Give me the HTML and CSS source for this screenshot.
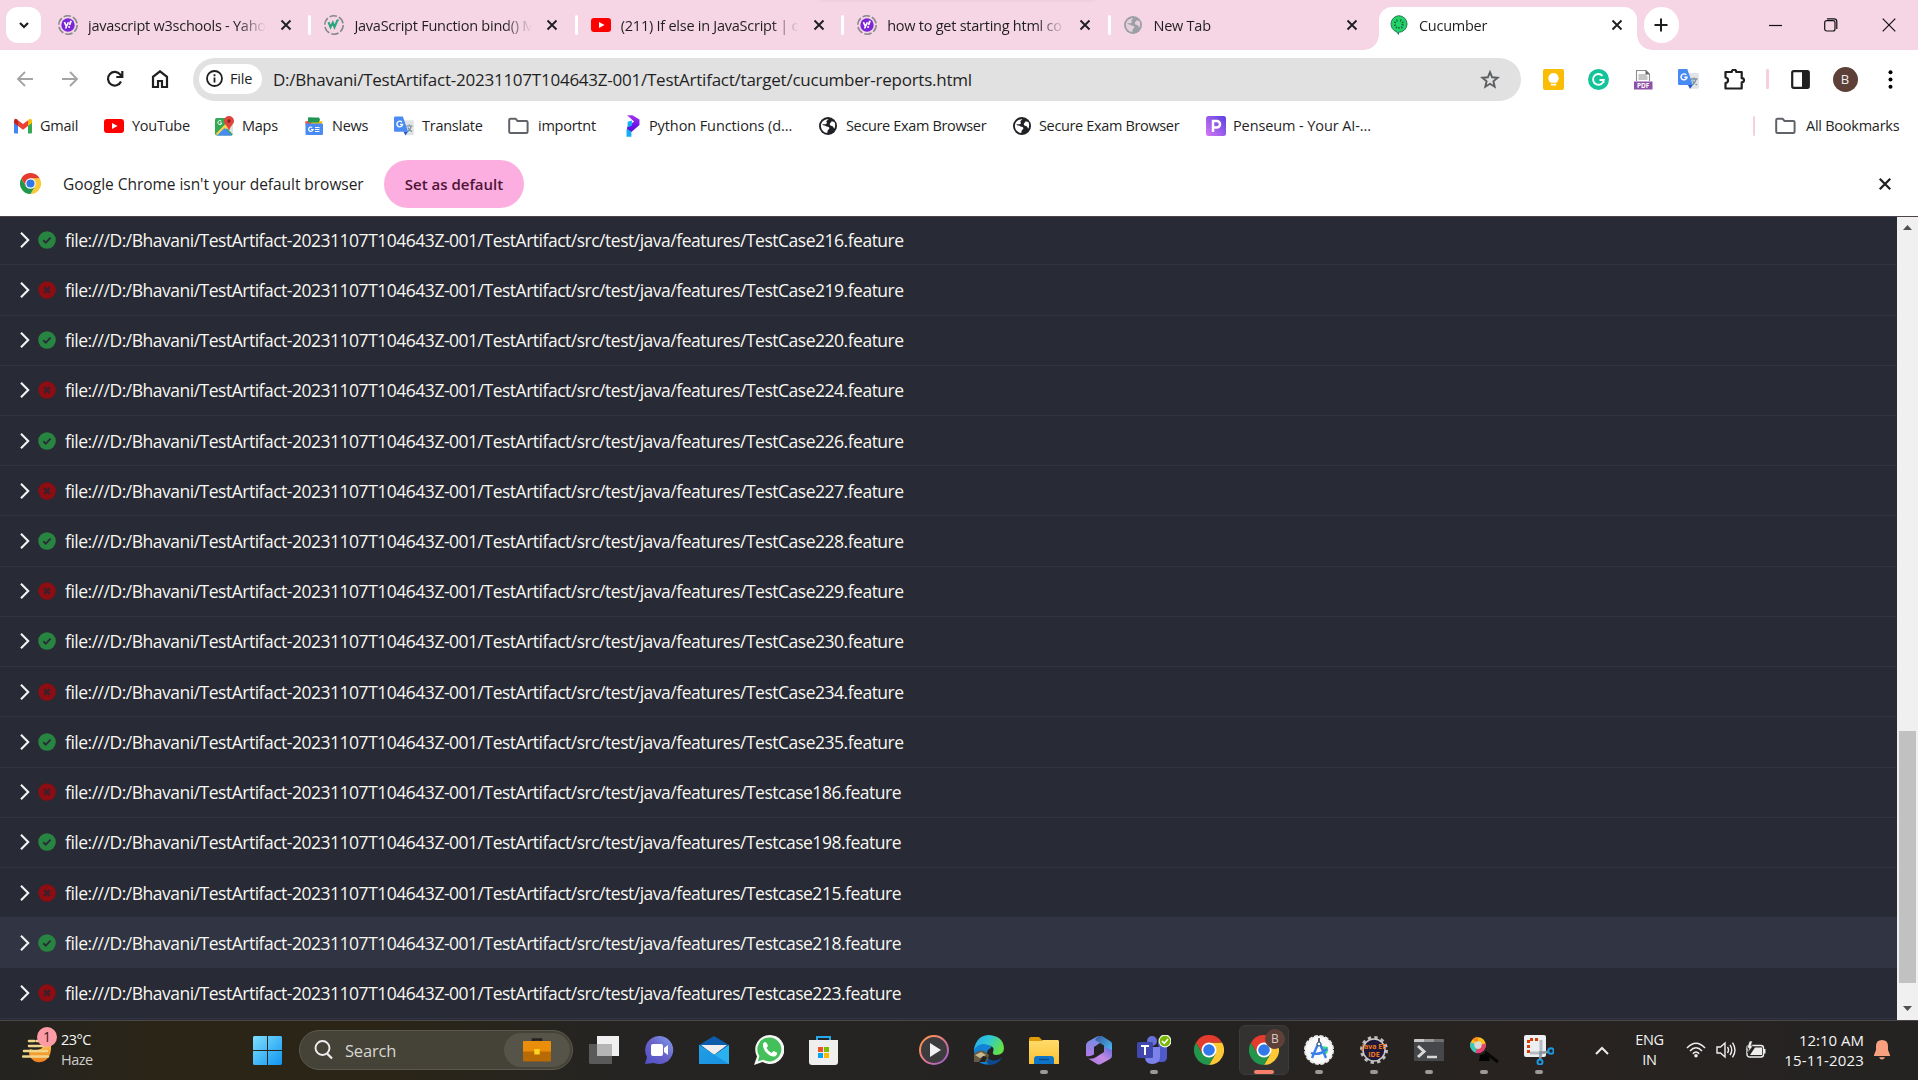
FILE: index.html
```html
<!DOCTYPE html>
<html lang="en">
<head>
<meta charset="utf-8">
<title>Cucumber</title>
<link rel="stylesheet" href="styles.css">
</head>
<body>
<svg class="defs" width="0" height="0" aria-hidden="true">
  <defs>
    <linearGradient id="g-win" x1="0" y1="0" x2="1" y2="1"><stop offset="0" stop-color="#7fe0ff"/><stop offset="1" stop-color="#0f94ef"/></linearGradient>
    <linearGradient id="g-chat" x1="1" y1="0" x2="0" y2="1"><stop offset="0" stop-color="#7ea2ee"/><stop offset=".5" stop-color="#6a62c8"/><stop offset="1" stop-color="#4f50c8"/></linearGradient>
    <linearGradient id="g-mail" x1="0" y1="0" x2="1" y2="1"><stop offset="0" stop-color="#1fa0e6"/><stop offset="1" stop-color="#1b8fe0"/></linearGradient>
    <linearGradient id="g-media" x1="0" y1="0" x2="1" y2="1"><stop offset="0" stop-color="#ff9a3c"/><stop offset=".5" stop-color="#e8788c"/><stop offset="1" stop-color="#8c5cd0"/></linearGradient>
    <linearGradient id="g-edge" x1="0" y1="0" x2="1" y2=".4"><stop offset="0" stop-color="#2aa7ee"/><stop offset=".5" stop-color="#2fc6d8"/><stop offset="1" stop-color="#62e04c"/></linearGradient>
    <linearGradient id="g-py" x1="0" y1="0" x2="0" y2="1"><stop offset="0" stop-color="#a435f0"/><stop offset=".6" stop-color="#6a11e8"/><stop offset="1" stop-color="#5a10d8"/></linearGradient>
    <linearGradient id="g-pen" x1="0" y1="1" x2="1" y2="0"><stop offset="0" stop-color="#d678f4"/><stop offset="1" stop-color="#5a3fe0"/></linearGradient>
    <linearGradient id="g-folder" x1="0" y1="0" x2="0" y2="1"><stop offset="0" stop-color="#ffdc6a"/><stop offset="1" stop-color="#fcc033"/></linearGradient>
    <linearGradient id="g-sun" x1="0" y1="0" x2="0" y2="1"><stop offset="0" stop-color="#fbc04a"/><stop offset="1" stop-color="#f07f1c"/></linearGradient>
    <linearGradient id="g-m1" x1="0" y1="0" x2="0" y2="1"><stop offset="0" stop-color="#6f8fe0"/><stop offset="1" stop-color="#b07ae6"/></linearGradient>
    <linearGradient id="g-m2" x1="0" y1="0" x2="1" y2="1"><stop offset="0" stop-color="#38589c"/><stop offset="1" stop-color="#4cc4fa"/></linearGradient>
    <linearGradient id="g-m3" x1="0" y1="1" x2="1" y2="0"><stop offset="0" stop-color="#a878e0"/><stop offset=".5" stop-color="#c48ae4"/><stop offset="1" stop-color="#5b6be0"/></linearGradient>

    <symbol id="close" viewBox="0 0 12 12"><path d="M1.5 1.5l9 9M10.500 1.500l-9 9" stroke="currentColor" stroke-width="1.9" fill="none"/></symbol>
    <symbol id="yahoo" viewBox="0 0 20 20"><circle cx="10" cy="10" r="9.200" fill="none" stroke="#85878e" stroke-width="1.500" stroke-dasharray="7.500 2.130"/><circle cx="10" cy="10" r="6.700" fill="#7b25d9"/><path d="M6.400 7.200l2 4.200M10.400 7.200l-2.800 6.300" stroke="#fff" stroke-width="1.600"/><path d="M13 5.800l-1.500 4.200" stroke="#fff" stroke-width="1.900"/><circle cx="11.100" cy="12" r="1" fill="#fff"/></symbol>
    <symbol id="w3" viewBox="0 0 20 20"><circle cx="10" cy="10" r="9.200" fill="none" stroke="#85878e" stroke-width="1.500" stroke-dasharray="7.500 2.130"/><path d="M4.500 7.200l2 5 2.300-4.600 1.700 4.600 2.300-5.600c.3-1.300 1-1.500 1.900-1" stroke="#2da57d" stroke-width="2.100" fill="none"/></symbol>
    <symbol id="yt" viewBox="0 0 20 14"><rect width="20" height="14" rx="3" fill="#f00"/><path d="M8 4l5.500 3L8 10z" fill="#fff"/></symbol>
    <symbol id="globe" viewBox="0 0 18 18"><circle cx="9" cy="9" r="9" fill="currentColor"/><path d="M9.500 2.200c-1 1.200-2.200 1.400-2.200 2.900 1.300.6.400 2.200-.9 2.100H3.200c1 1.700 3 1 4.400 2.200 1.500.3 2.600.6 2.800 1.700.1 1.400-1.700 1.600-1.900 3.100L8.300 16C5 16 1.700 12.800 1.900 8.300 2.300 4.500 5.700 1.900 9.500 2.200z" fill="var(--hole)"/><path d="M12.300 4.500c1.500-.2 2.400-.1 3.100.6 1 2 1 4.300.1 6.400-1.100-.2-.9-2.300-2.500-2.600-1.600-.1-2.400-1-2.200-2.100.2-1 1.400-1 1.500-2.300z" fill="var(--hole)"/></symbol>
    <symbol id="cuke" viewBox="0 0 18 20"><path d="M9 .7a8.300 8.300 0 1 1-.5 16.600V19.400l-1.700-2.500A8.300 8.300 0 0 1 9 .7z" fill="#24d366" stroke="#1f6b50" stroke-width=".9"/><g stroke="#11604a" stroke-width="1.300" stroke-linecap="round"><path d="M6.800 5l.4.900M10.900 5l-.4.900M13 7.200l-.8.500M4.700 7.200l.9.400M4.500 10.300l1-.2M6.200 12.900l.5-.8M9 12.300v1M11.500 12l.6.800M12 9.700l1.200.2"/></g></symbol>
    <symbol id="folder" viewBox="0 0 21 17"><path d="M1.200 14V2.500q0-1.300 1.300-1.300h5l2 2.300h8.800q1.300 0 1.300 1.300V14q0 1.500-1.300 1.500H2.500Q1.200 15.500 1.200 14z" fill="none" stroke="#5f6368" stroke-width="2"/></symbol>
    <symbol id="translate" viewBox="0 0 21 20"><path d="M8 4h11.500q1.300 0 1.300 1.300v13.200q0 1.300-1.300 1.300H13z" fill="#e1e3e6"/><path d="M12.500 10h7M16 8.500v1.500M14 16c2-1 3.500-3 4-6M14.500 11.500c.8 2 2 3.200 4.500 4.400" stroke="#7893a0" stroke-width="1.300" fill="none"/><path d="M1.300 0h8l5.500 16H1.300Q0 16 0 14.700V1.300Q0 0 1.300 0z" fill="#4a8af4"/><path d="M10 16h4.700L12 20z" fill="#2457c5"/><path d="M8.300 5.900A3 3 0 1 0 9 8.300H6.300" stroke="#fff" stroke-width="1.400" fill="none"/></symbol>
    <symbol id="chrome" viewBox="0 0 48 48"><path d="M24 12h20.800A24 24 0 0 1 24 48l10.400-18z" fill="#fcc934"/><path d="M34.400 30L24 48A24 24 0 0 1 3.200 12l10.400 18z" fill="#22974c"/><path d="M13.600 30L3.200 12A24 24 0 0 1 44.800 12H24z" fill="#e33b2e"/><circle cx="24" cy="24" r="12" fill="#fff"/><circle cx="24" cy="24" r="9.300" fill="#3178ea"/></symbol>
    <symbol id="pass" viewBox="0 0 18 18"><circle cx="9" cy="9" r="8.800" fill="#288441"/><path d="M5.300 9.200l2.500 2.400 4.800-4.900" stroke="#2a2b38" stroke-width="1.900" fill="none"/></symbol>
    <symbol id="fail" viewBox="0 0 18 18"><circle cx="9" cy="9" r="8.800" fill="#8c0d12"/><path d="M6.300 6.300l5.400 5.400M11.700 6.300l-5.400 5.400" stroke="#35232e" stroke-width="2.300" fill="none"/></symbol>
    <symbol id="chev" viewBox="0 0 10 16"><path d="M1 .8l7.200 7.200L1 15.200" stroke="#f4f4f4" stroke-width="2.100" fill="none"/></symbol>
  </defs>
</svg>

<header class="tabstrip">
  <div class="tab-search"><svg width="10" height="7" viewBox="0 0 10 7"><path d="M1 1l4 4 4-4" stroke="#1f1f1f" stroke-width="2.200" fill="none"/></svg></div>
  <div class="tab"><svg class="fav"><use href="#yahoo"/></svg><span class="tab-title">javascript w3schools - Yahoo</span><svg class="x"><use href="#close"/></svg></div>
  <div class="tab"><svg class="fav"><use href="#w3"/></svg><span class="tab-title">JavaScript Function bind() M</span><svg class="x"><use href="#close"/></svg></div>
  <div class="tab"><svg class="fav fav-yt"><use href="#yt"/></svg><span class="tab-title">(211) If else in JavaScript | c</span><svg class="x"><use href="#close"/></svg></div>
  <div class="tab"><svg class="fav"><use href="#yahoo"/></svg><span class="tab-title">how to get starting html co</span><svg class="x"><use href="#close"/></svg></div>
  <div class="tab last"><svg class="fav fav-globe"><use href="#globe"/></svg><span class="tab-title">New Tab</span><svg class="x"><use href="#close"/></svg></div>
  <div class="tab active"><svg class="fav fav-cuke"><use href="#cuke"/></svg><span class="tab-title">Cucumber</span><svg class="x"><use href="#close"/></svg></div>
  <div class="new-tab"><svg width="14" height="14" viewBox="0 0 14 14"><path d="M7 .5v13M.5 7h13" stroke="#1f1f1f" stroke-width="2"/></svg></div>
  <div class="window-buttons">
    <svg width="13" height="13" viewBox="0 0 13 13"><path d="M0 6.500h13" stroke="#111" stroke-width="1.200"/></svg>
    <svg width="14" height="14" viewBox="0 0 14 14"><rect x=".7" y="2.700" width="10.300" height="10.300" rx="2" fill="none" stroke="#111" stroke-width="1.200"/><path d="M3 .8h7q2.800 0 2.800 2.800V11" fill="none" stroke="#111" stroke-width="1.200"/></svg>
    <svg width="14" height="14" viewBox="0 0 14 14"><path d="M.7.7l12.600 12.600M13.300.7L.7 13.300" stroke="#111" stroke-width="1.200"/></svg>
  </div>
</header>

<nav class="toolbar">
  <svg class="nav-icon dim" viewBox="0 0 18 18"><path d="M17 9H2.500M9 2L2 9l7 7" /></svg>
  <svg class="nav-icon dim" viewBox="0 0 18 18"><path d="M1 9h14.500M9 2l7 7-7 7"/></svg>
  <svg class="nav-icon" viewBox="0 0 18 18"><path d="M15 11.500A6.800 6.800 0 1 1 14.300 4.700L16 6.600M16.300 1v6h-6"/></svg>
  <svg class="nav-icon" viewBox="0 0 18 18"><path d="M2 17V6.800L9 1.300l7 5.500V17h-5v-6H7v6z"/></svg>
  <div class="omnibox">
    <span class="chip"><svg width="17" height="17" viewBox="0 0 17 17"><circle cx="8.500" cy="8.500" r="7.500" fill="none" stroke="#1f1f1f" stroke-width="1.800"/><path d="M8.500 7.500v5M8.500 4.300v1.900" stroke="#1f1f1f" stroke-width="1.800"/></svg><span class="chip-text">File</span></span>
    <span class="url">D:/Bhavani/TestArtifact-20231107T104643Z-001/TestArtifact/target/cucumber-reports.html</span>
    <svg class="star" width="20" height="19" viewBox="0 0 20 19"><path d="M10 2.200l2.100 5.100 5.500.4-4.200 3.600 1.300 5.400L10 13.800l-4.700 2.900 1.300-5.400-4.200-3.600 5.500-.4z" fill="none" stroke="#5c5f62" stroke-width="1.900"/></svg>
  </div>
  <div class="extensions">
    <svg viewBox="0 0 21 21" width="21" height="21"><rect width="21" height="21" rx="2" fill="#fbbc04"/><path d="M10.500 4a5.300 5.300 0 0 0-2.800 9.700h5.600A5.300 5.300 0 0 0 10.500 4zM7.800 14.800h5.400v1.700H7.800z" fill="#fff"/></svg>
    <svg viewBox="0 0 21 21" width="21" height="21"><circle cx="10.500" cy="10.500" r="10.500" fill="#15c39a"/><path d="M14.500 6.800A5.400 5.400 0 1 0 15.800 11h-4.300M15.500 10.500V14" stroke="#fff" stroke-width="1.900" fill="none"/></svg>
    <svg viewBox="0 0 21 21" width="21" height="21"><path d="M3.500 12V1.500h9.500l3.500 3.500v7" fill="#fff" stroke="#8d8d8d" stroke-width="1.100"/><path d="M12.500 1v4.500h4.300z" fill="#666"/><path d="M5.500 6h8M5.500 8h9M5.500 10h9" stroke="#8d8d8d"/><rect x="1" y="12.500" width="18.500" height="8" fill="#8d52a8"/><text x="10.200" y="18.900" class="pdf" text-anchor="middle">PDF</text></svg>
    <svg width="21" height="20"><use href="#translate"/></svg>
    <svg class="puzzle" viewBox="0 0 21 21" width="21" height="21"><path d="M1.500 3h6.300c0-3 4.400-3 4.400 0h5.500v6.200c3 0 3 4.200 0 4.200V19.500H1.500V14c3.400-.5 3.400-5 0-5.500z" fill="none" stroke="#1f1f1f" stroke-width="2.200" stroke-linejoin="round"/></svg>
    <i class="divider"></i>
    <svg class="panel" viewBox="0 0 19 19" width="19" height="19"><rect x="1.200" y="1.200" width="16.600" height="16.600" rx="1.500" fill="none" stroke="#1f1f1f" stroke-width="2.200"/><path d="M11 1h7v17h-7z" fill="#1f1f1f"/></svg>
    <span class="avatar">B</span>
    <svg class="more" viewBox="0 0 5 19" width="5" height="19"><circle cx="2.500" cy="2.300" r="2" /><circle cx="2.500" cy="9.500" r="2"/><circle cx="2.500" cy="16.700" r="2"/></svg>
  </div>
</nav>

<nav class="bookmarks">
  <a class="bm gmail"><svg class="ic" viewBox="0 0 18 16"><path d="M0 2.500V14.500q0 1 1 1h3V7z" fill="#4285f4"/><path d="M18 2.500v12q0 1-1 1h-3V7z" fill="#34a853"/><path d="M14 2.200l1-.9q1.300-.8 2.400 0l.6 1.200V5l-4 3z" fill="#fbbc04"/><path d="M4 2.200L9 6l5-3.800V8L9 11.800 4 8z" fill="#ea4335"/><path d="M0 2.500Q.6 0 3 1.300l1 .9V8L0 5z" fill="#c5221f"/></svg><span>Gmail</span></a>
  <a class="bm youtube"><svg class="ic"><use href="#yt"/></svg><span>YouTube</span></a>
  <a class="bm maps"><svg class="ic" viewBox="0 0 19 20"><rect y="2" width="18" height="17.500" rx="2" fill="#34a853"/><path d="M18 3.500v15L9.500 10z" fill="#dfe1e4"/><path d="M1 17.500L14 4.500l3 3L4.500 19H2z" fill="#fbd04b"/><path d="M9.500 12l7.500 7.500H2z" fill="#4a8af4"/><path d="M14 0a5 5 0 0 1 5 5c0 3.500-3.500 4-4.500 9h-1C12.500 9 9 8.500 9 5a5 5 0 0 1 5-5z" fill="#e0443a"/><circle cx="14" cy="5" r="1.700" fill="#8a211b"/><path d="M6.300 5.200A2 2 0 1 0 6.800 7H5" stroke="#fff" fill="none"/></svg><span>Maps</span></a>
  <a class="bm news"><svg class="ic" viewBox="0 0 18 19"><path d="M4 1l11 1-1 8H3z" fill="#219653"/><path d="M0 5l13-3 2 8H1z" fill="#ea5a50"/><path d="M7 3l10.500 2L16 12H5z" fill="#fbbc04"/><path d="M3 1h11v5H3z" fill="#219653"/><path d="M1 7h16q1 0 1 1v9.500q0 1-1 1H1.500q-1 0-1-1V8z" fill="#4a8af4"/><path d="M7.200 11A2.200 2.200 0 1 0 8 13H6M10 11h4.500M10 13h4.500M10 15h4.500" stroke="#fff" stroke-width="1.200" fill="none"/></svg><span>News</span></a>
  <a class="bm translate"><svg class="ic"><use href="#translate"/></svg><span>Translate</span></a>
  <a class="bm dir"><svg class="ic"><use href="#folder"/></svg><span>importnt</span></a>
  <a class="bm python"><svg class="ic" viewBox="0 0 13 20"><path d="M1 0h5l6.500 4v5L5 15.500 1 17v-6L7.500 5.800z" fill="url(#g-py)"/><path d="M1.500 6l4-1v4.500l-4 2z" fill="#12aef2"/><path d="M.5 12.500L5 15v5H.5z" fill="#12aef2"/></svg><span>Python Functions (d...</span></a>
  <a class="bm seb1"><svg class="ic"><use href="#globe"/></svg><span>Secure Exam Browser</span></a>
  <a class="bm seb2"><svg class="ic"><use href="#globe"/></svg><span>Secure Exam Browser</span></a>
  <a class="bm penseum"><svg class="ic" viewBox="0 0 20 20"><rect width="20" height="20" rx="2.500" fill="url(#g-pen)"/><path d="M7 16V5h3.700a3.200 3.200 0 0 1 0 6.600H7" fill="none" stroke="#fff" stroke-width="2.500"/></svg><span>Penseum - Your AI-...</span></a>
  <i class="divider"></i>
  <a class="bm all"><svg class="ic"><use href="#folder"/></svg><span>All Bookmarks</span></a>
</nav>

<section class="infobar">
  <svg class="brand"><use href="#chrome"/></svg>
  <span class="message">Google Chrome isn't your default browser</span>
  <button class="default-btn"><span>Set as default</span></button>
  <svg class="dismiss"><use href="#close"/></svg>
</section>

<main class="viewport">
  <ul class="report">
    <li><svg class="chev"><use href="#chev"/></svg><svg class="st"><use href="#pass"/></svg><span>file:///D:/Bhavani/TestArtifact-20231107T104643Z-001/TestArtifact/src/test/java/features/TestCase216.feature</span></li>
    <li><svg class="chev"><use href="#chev"/></svg><svg class="st"><use href="#fail"/></svg><span>file:///D:/Bhavani/TestArtifact-20231107T104643Z-001/TestArtifact/src/test/java/features/TestCase219.feature</span></li>
    <li><svg class="chev"><use href="#chev"/></svg><svg class="st"><use href="#pass"/></svg><span>file:///D:/Bhavani/TestArtifact-20231107T104643Z-001/TestArtifact/src/test/java/features/TestCase220.feature</span></li>
    <li><svg class="chev"><use href="#chev"/></svg><svg class="st"><use href="#fail"/></svg><span>file:///D:/Bhavani/TestArtifact-20231107T104643Z-001/TestArtifact/src/test/java/features/TestCase224.feature</span></li>
    <li><svg class="chev"><use href="#chev"/></svg><svg class="st"><use href="#pass"/></svg><span>file:///D:/Bhavani/TestArtifact-20231107T104643Z-001/TestArtifact/src/test/java/features/TestCase226.feature</span></li>
    <li><svg class="chev"><use href="#chev"/></svg><svg class="st"><use href="#fail"/></svg><span>file:///D:/Bhavani/TestArtifact-20231107T104643Z-001/TestArtifact/src/test/java/features/TestCase227.feature</span></li>
    <li><svg class="chev"><use href="#chev"/></svg><svg class="st"><use href="#pass"/></svg><span>file:///D:/Bhavani/TestArtifact-20231107T104643Z-001/TestArtifact/src/test/java/features/TestCase228.feature</span></li>
    <li><svg class="chev"><use href="#chev"/></svg><svg class="st"><use href="#fail"/></svg><span>file:///D:/Bhavani/TestArtifact-20231107T104643Z-001/TestArtifact/src/test/java/features/TestCase229.feature</span></li>
    <li><svg class="chev"><use href="#chev"/></svg><svg class="st"><use href="#pass"/></svg><span>file:///D:/Bhavani/TestArtifact-20231107T104643Z-001/TestArtifact/src/test/java/features/TestCase230.feature</span></li>
    <li><svg class="chev"><use href="#chev"/></svg><svg class="st"><use href="#fail"/></svg><span>file:///D:/Bhavani/TestArtifact-20231107T104643Z-001/TestArtifact/src/test/java/features/TestCase234.feature</span></li>
    <li><svg class="chev"><use href="#chev"/></svg><svg class="st"><use href="#pass"/></svg><span>file:///D:/Bhavani/TestArtifact-20231107T104643Z-001/TestArtifact/src/test/java/features/TestCase235.feature</span></li>
    <li><svg class="chev"><use href="#chev"/></svg><svg class="st"><use href="#fail"/></svg><span>file:///D:/Bhavani/TestArtifact-20231107T104643Z-001/TestArtifact/src/test/java/features/Testcase186.feature</span></li>
    <li><svg class="chev"><use href="#chev"/></svg><svg class="st"><use href="#pass"/></svg><span>file:///D:/Bhavani/TestArtifact-20231107T104643Z-001/TestArtifact/src/test/java/features/Testcase198.feature</span></li>
    <li><svg class="chev"><use href="#chev"/></svg><svg class="st"><use href="#fail"/></svg><span>file:///D:/Bhavani/TestArtifact-20231107T104643Z-001/TestArtifact/src/test/java/features/Testcase215.feature</span></li>
    <li class="hover"><svg class="chev"><use href="#chev"/></svg><svg class="st"><use href="#pass"/></svg><span>file:///D:/Bhavani/TestArtifact-20231107T104643Z-001/TestArtifact/src/test/java/features/Testcase218.feature</span></li>
    <li><svg class="chev"><use href="#chev"/></svg><svg class="st"><use href="#fail"/></svg><span>file:///D:/Bhavani/TestArtifact-20231107T104643Z-001/TestArtifact/src/test/java/features/Testcase223.feature</span></li>
  </ul>
  <div class="scrollbar">
    <svg width="9" height="5" viewBox="0 0 9 5"><path d="M0 5L4.500 0 9 5z" fill="#505050"/></svg>
    <div class="thumb"></div>
    <svg width="9" height="5" viewBox="0 0 9 5"><path d="M0 0l4.500 5L9 0z" fill="#505050"/></svg>
  </div>
</main>

<footer class="taskbar">
  <div class="weather">
    <svg width="37" height="40" viewBox="0 0 37 40"><path d="M8 22q10 4 15-5h6q1 11-5 16-6 4-12 1-4-3-5-7z" fill="url(#g-sun)"/><path d="M7 14h5M14.500 14h4M7 19h19M2 24h23M6 29.500h20M1 29.500h4" stroke="#f0d68c" stroke-width="2.500" stroke-linecap="round"/><circle cx="25" cy="10" r="10" fill="#ff9ba5"/><text x="25" y="15" class="count" text-anchor="middle">1</text></svg>
    <div class="weather-text"><span>23°C</span><span class="muted">Haze</span></div>
  </div>
  <svg class="start" width="29" height="29" viewBox="0 0 29 29"><path d="M1 0h13v14H0V1zM15 0h13l1 1v13H15zM0 15h14v14H1l-1-1zM15 15h14v13l-1 1H15z" fill="url(#g-win)"/></svg>
  <div class="search">
    <svg width="20" height="20" viewBox="0 0 20 20"><circle cx="8.500" cy="8" r="7" fill="none" stroke="#eee" stroke-width="1.900"/><path d="M13 13.500l5 5" stroke="#eee" stroke-width="2.300"/></svg>
    <span>Search</span>
    <div class="highlight"><svg width="28" height="24" viewBox="0 0 28 24"><path d="M10 3V1.500h8V3" stroke="#222" stroke-width="2.500" fill="none"/><rect y="3" width="28" height="20.500" rx="1" fill="#b86a04"/><path d="M0 4q0-1 1-1h26q1 0 1 1v9.500H0z" fill="#e98d0b"/><rect x="11.300" y="11" width="5.400" height="5.500" fill="#ffd21c"/></svg></div>
  </div>
  <div class="apps">
    <div class="app"><svg viewBox="0 0 30 30"><path d="M8 1h22v20H8z" fill="#f0f0f0"/><path d="M0 9h23v20H1l-1-1z" fill="#606060" fill-opacity=".9"/><path d="M8 9h15v12H8z" fill="#b5b5b5"/></svg></div>
    <div class="app"><svg viewBox="0 0 30 30"><path d="M15 1a14 14 0 1 1-5 27l-9 1 2-7A14 14 0 0 1 15 1z" fill="url(#g-chat)"/><rect x="7" y="9" width="12" height="12" rx="2" fill="#fff"/><path d="M20 13l4-3v10l-4-3z" fill="#fff"/></svg></div>
    <div class="app"><svg viewBox="0 0 30 30"><path d="M0 10L15 1l15 9v5H0z" fill="#0b5cab"/><path d="M2 10h26L15 20z" fill="#eee"/><path d="M0 10l15 10L30 10v19H0z" fill="#29b1f0"/><path d="M0 10l30 19H0z" fill="url(#g-mail)"/></svg></div>
    <div class="app"><svg viewBox="0 0 30 30"><path d="M15.500 0a14.500 14.500 0 1 1-7 27L0 30l3-8.500A14.500 14.500 0 0 1 15.500 0z" fill="#f5f7f5"/><path d="M15.500 2.400a12 12 0 1 1-6.200 22.400l-5.400 1.400 1.500-5.200A12 12 0 0 1 15.500 2.400z" fill="#44c05a"/><path d="M9 8.500q2-3 4 0l1 2.500-1.500 2q2 3.500 5 5l2-2 3.500 1.600q1 1.700-1.500 3.600-4 1.500-9-3.500-4-4-3.500-9.200z" fill="#fff"/></svg></div>
    <div class="app"><svg viewBox="0 0 30 30"><path d="M8 7V2h13v5" fill="none" stroke="#27a8e8" stroke-width="2"/><path d="M0 5h29v22q0 3-3 3H3q-3 0-3-3z" fill="#efefef"/><path d="M9 12h5v5H9z" fill="#f05125"/><path d="M15 12h5v5h-5z" fill="#7fb900"/><path d="M9 18h5v5H9z" fill="#02a4ef"/><path d="M15 18h5v5h-5z" fill="#ffb900"/></svg></div>
    <div class="app"></div>
    <div class="app"><svg viewBox="0 0 30 30"><circle cx="15" cy="15" r="14" fill="#3c3c3f" stroke="url(#g-media)" stroke-width="2"/><path d="M11 8l11 7-11 7z" fill="#f2f2f2"/></svg></div>
    <div class="app"><svg viewBox="0 0 30 30"><path d="M0 14Q3 0 15 0q14 1 15 13 0 7-8 7-4-.5-3-3 2-5-3-6Q6 9 0 17z" fill="url(#g-edge)"/><path d="M0 15q3-6 10-6 8 1 7 4-5 2-4 7 1 7 7 8-3 2-8 1.500Q0 28 0 15z" fill="#1182d6"/><path d="M12.500 18q0 6 6 7.500 5 .5 9.500-3Q24 30 15 30q-6-5-2.500-12z" fill="#0c4a91"/><path d="M0 19q5-5 10-3l5 4-2 7H0z" fill="#655a43"/><path d="M1 20l6-3 5 3-6 3z" fill="#c7b890"/><path d="M9 21l4 1-2 5H5z" fill="#252321"/></svg></div>
    <div class="app run"><svg viewBox="0 0 30 30"><path d="M0 4q0-2 2-2h8l3 3-2 5H0z" fill="#e09b09"/><path d="M0 6h12l2-1h15l1 1v23H0z" fill="url(#g-folder)"/><path d="M5 29v-5q0-3 3-3h14q3 0 3 3v5z" fill="#0f75c9"/><path d="M10 24.500h10" stroke="#0a4d8e" stroke-width="1.500"/></svg></div>
    <div class="app"><svg viewBox="0 0 30 30"><path d="M14 1L4 6.500Q2 8 2 10v11q4 1 8-1.500V12l9-6z" fill="url(#g-m1)"/><path d="M14 1h4l8 5q2 1 2 3v10l-8-4v-4.500L11 5z" fill="url(#g-m2)"/><path d="M28 15v6q0 2-2 3l-9 5q-2 1-4 0l-9-5.500q5 1 9-2l7-4.500v-5z" fill="url(#g-m3)"/></svg></div>
    <div class="app run wide"><svg viewBox="0 0 34 30"><circle cx="15" cy="6" r="5" fill="#6670d8"/><circle cx="25" cy="9" r="4" fill="#5059c9"/><path d="M20 12h10v10q0 5-5 5h-5z" fill="#5059c9"/><path d="M8 12h15v10q0 7-8 7-7 0-7-7z" fill="#7b83eb"/><rect y="7" width="16" height="16" rx="1.500" fill="#4048b0"/><path d="M4 11h8M8 11v9" stroke="#fff" stroke-width="2"/><circle cx="28" cy="6" r="6.500" fill="#f3f7e8"/><circle cx="28" cy="6" r="5.300" fill="#76b900"/><path d="M25 6l2.300 2.400L31 4" stroke="#fff" stroke-width="1.600" fill="none"/></svg></div>
    <div class="app"><svg><use href="#chrome"/></svg></div>
    <div class="app current run"><svg><use href="#chrome"/></svg><span class="profile">B</span></div>
    <div class="app run"><svg viewBox="0 0 30 30"><circle cx="15" cy="15" r="14" fill="#fafafa" stroke="#e8e8e8" stroke-width="2" stroke-dasharray="4 1.500"/><path d="M18 11l6 1q1 7-4 8z" fill="#3ddb84"/><path d="M14 9L8 23M16 9l6 14M7 18q8 3 16-4" stroke="#3b7fee" stroke-width="2.400" fill="none"/><circle cx="15" cy="9" r="2" fill="#fff" stroke="#174a6e"/><path d="M15 3v4" stroke="#334" stroke-width="1.500"/></svg></div>
    <div class="app run"><svg viewBox="0 0 30 30"><circle cx="15" cy="15" r="12.500" fill="none" stroke="#bebebe" stroke-width="3" stroke-dasharray="3.300 3.240"/><circle cx="15" cy="15" r="11" fill="#201838" stroke="#c8c8c8" stroke-width="1.500"/><text class="ide" x="15" y="14" text-anchor="middle">Java EE</text><text class="ide" x="15" y="21.500" text-anchor="middle">IDE</text></svg></div>
    <div class="app run"><svg viewBox="0 0 30 30"><path d="M0 5q0-1 1-1h28q1 0 1 1v21H0z" fill="#45474a"/><path d="M0 5q0-1 1-1h9v3H0z" fill="#c8c8c8"/><path d="M10 4h10v3H10z" fill="#989898"/><path d="M20 4h9q1 0 1 1v2H20z" fill="#707070"/><path d="M4 11l6 5.500L4 22" stroke="#d8d8d8" stroke-width="3" fill="none"/><path d="M13 22h10" stroke="#d8d8d8" stroke-width="2.500"/></svg></div>
    <div class="app run"><svg viewBox="0 0 30 30"><path d="M11 20l8-2 2 8H10z" fill="#050505"/><path d="M16 17l13 10" stroke="#080808" stroke-width="3"/><circle cx="9" cy="10" r="5.800" fill="#d8dadc" stroke="#ffc21c" stroke-width="4"/><path d="M3.500 8A6 6 0 0 0 8 16" stroke="#35c7c0" stroke-width="4" fill="none"/><path d="M7 16a6 6 0 0 0 7.500-7" stroke="#e84078" stroke-width="4" fill="none"/><path d="M5 5.500a6 6 0 0 1 4-1.500" stroke="#ff8620" stroke-width="4" fill="none"/></svg></div>
    <div class="app run"><svg viewBox="0 0 30 30"><rect width="22" height="22" rx="2" fill="#edf0f2"/><path d="M4.500 18V4.500H16" stroke="#d83b01" stroke-width="3" stroke-dasharray="3 2" fill="none"/><path d="M17 5v13H6" stroke="#b5bcc2" stroke-width="3" fill="none"/><path d="M17 16l-1 9M15 18l9-1" stroke="#8b959c" stroke-width="2.500"/><circle cx="27" cy="16" r="2.700" fill="none" stroke="#1b98e0" stroke-width="2"/><circle cx="16" cy="27" r="2.500" fill="none" stroke="#1b98e0" stroke-width="2"/></svg></div>
  </div>
  <div class="tray">
    <svg class="up" width="14" height="9" viewBox="0 0 14 9"><path d="M1 8l6-6 6 6" stroke="#eee" stroke-width="2" fill="none"/></svg>
    <div class="lang"><span>ENG</span><span>IN</span></div>
    <svg width="20" height="16" viewBox="0 0 20 16"><path d="M1 6q9-9.500 18 0M4 9q6-6.500 12 0M6.800 11.800q3.200-3.500 6.400 0" stroke="#eee" stroke-width="1.500" fill="none"/><circle cx="10" cy="13.800" r="1.800" fill="#eee"/></svg>
    <svg width="20" height="18" viewBox="0 0 20 18"><path d="M1 6h3.500L9 2v14l-4.500-4H1z" stroke="#eee" stroke-width="1.400" fill="none"/><path d="M11.500 6q2 3 0 6M14 3.800q3.500 5.200 0 10.400M16.500 1.700q5 7.300 0 14.600" stroke="#eee" stroke-width="1.400" fill="none"/></svg>
    <svg width="20" height="18" viewBox="0 0 20 18"><rect x="1" y="4.500" width="16.500" height="11.500" rx="2.500" stroke="#eee" stroke-width="1.400" fill="none"/><path d="M9 6.500h7v7.500H4z" fill="#eee"/><path d="M18.500 8v4.500" stroke="#eee" stroke-width="2"/><path d="M3.500 0L1 7h2L1.500 12 7 5H5l1.500-5z" fill="#eee" stroke="#242321" stroke-width=".6"/></svg>
    <div class="clock"><span>12:10 AM</span><span class="date">15-11-2023</span></div>
    <svg class="bell" width="16" height="20" viewBox="0 0 16 20"><path d="M8 0q6 0 6 6v4l2 5v1H0v-1l2-5V6q0-6 6-6z" fill="#f9a080"/><path d="M5 17.200h6q-1 2.400-3 2.400t-3-2.400z" fill="#f9a080"/></svg>
  </div>
</footer>
</body>
</html>
```
FILE: styles.css
```css
* { box-sizing: border-box; }
body {
  margin: 0;
  width: 1918px;
  height: 1080px;
  overflow: hidden;
  display: flex;
  flex-direction: column;
  background: #fff;
  font-family: "Open Sans", "Noto Sans", sans-serif;
  color: #1f1f1f;
  white-space: nowrap;
}
svg { display: block; flex: none; }
.defs { position: absolute; }

/* Tab strip */
.tabstrip {
  flex: none;
  height: 50px;
  display: flex;
  align-items: center;
  padding-left: 6px;
  background: linear-gradient(#f0cddc, #f6d6e4) 820px 0 / 275px 3px no-repeat, #f6d6e4;
}
.tab-search {
  width: 35px;
  height: 36px;
  margin-right: 3px;
  border-radius: 12px;
  background: #fff;
  display: flex;
  align-items: center;
  justify-content: center;
}
.tab {
  position: relative;
  flex: none;
  width: 266.400px;
  height: 36px;
  padding: 0 18px 0 14px;
  display: flex;
  align-items: center;
}
.tab::after {
  content: "";
  position: absolute;
  right: -1px;
  top: 8px;
  width: 3px;
  height: 20px;
  border-radius: 2px;
  background: #fff;
}
.tab.last::after { display: none; }
.fav { width: 20px; height: 20px; margin-right: 10px; }
.fav-yt { height: 18px; }
.fav-globe { width: 18px; height: 18px; margin-right: 12px; color: #9aa0a6; --hole: #e6cfda; }
.fav-cuke { width: 18px; margin-right: 11px; }
.tab-title {
  flex: none;
  width: 178px;
  margin-right: 14px;
  overflow: hidden;
  font-size: 14.500px;
  letter-spacing: -0.250px;
  -webkit-mask-image: linear-gradient(to right, #000 150px, transparent 178px);
  mask-image: linear-gradient(to right, #000 150px, transparent 178px);
}
.x { width: 12px; height: 12px; }
.tab.active {
  width: 258px;
  height: 43px;
  align-self: flex-end;
  margin: 0 6px 0 3px;
  padding: 0 13px 7px 11px;
  border-radius: 13px 13px 0 0;
  background: #fff;
}
.tab.active .tab-title { width: 191px; margin-right: 1px; }
.tab.active::before, .tab.active::after {
  content: "";
  display: block;
  position: absolute;
  top: auto;
  right: auto;
  bottom: 0;
  left: -15px;
  width: 15px;
  height: 15px;
  border-radius: 0;
  background: radial-gradient(circle at 0 0, transparent 14.500px, #fff 15px);
}
.tab.active::after {
  left: 258px;
  background: radial-gradient(circle at 15px 0, transparent 14.500px, #fff 15px);
}
.new-tab {
  width: 35px;
  height: 36px;
  margin-left: 1px;
  border-radius: 18px;
  background: #fff;
  display: flex;
  align-items: center;
  justify-content: center;
}
.window-buttons {
  margin-left: auto;
  margin-right: 22px;
  display: flex;
  align-items: center;
  gap: 42px;
}
.window-buttons svg:last-child { margin-left: 2px; }

/* Toolbar */
.toolbar {
  flex: none;
  height: 58px;
  display: flex;
  align-items: center;
  padding: 0 25px 0 16px;
}
.nav-icon { width: 18px; height: 18px; margin-right: 27px; fill: none; stroke: #1f1f1f; stroke-width: 2.200; }
.nav-icon:nth-child(4) { margin-right: 24px; }
.nav-icon.dim { stroke: #a2a4a6; stroke-width: 1.900; }
.omnibox {
  width: 1328px;
  height: 43px;
  padding: 0 21px 0 6px;
  border-radius: 22px;
  background: #e1e1e1;
  display: flex;
  align-items: center;
}
.chip {
  width: 63px;
  height: 30px;
  padding: 0 0 1px 7px;
  border-radius: 15px;
  background: #fff;
  display: flex;
  align-items: center;
}
.chip-text { margin-left: 7px; font-size: 14.500px; font-weight: 500; letter-spacing: -0.200px; }
.url { margin-left: 11px; font-size: 17px; letter-spacing: -0.240px; }
.star { margin-left: auto; }
.extensions { margin-left: auto; width: 350px; display: flex; align-items: center; gap: 24px; }
.extensions .puzzle { margin-left: 1px; }
.extensions .divider { margin-left: -3px; margin-right: -2px; }
.extensions .avatar { margin-left: -1px; }
.extensions .more { margin-left: 6px; }
.pdf { font: bold 6.500px "Open Sans", sans-serif; fill: #fff; }
.divider { flex: none; width: 2.500px; height: 20px; background: #f6d0e1; border-radius: 1px; }
.avatar {
  flex: none;
  width: 25px;
  height: 25px;
  border-radius: 50%;
  background: #5d4037;
  color: #eee;
  font-size: 13px;
  line-height: 25px;
  text-align: center;
}

/* Bookmarks */
.bookmarks {
  flex: none;
  height: 36px;
  display: flex;
  align-items: center;
  padding: 0 17px 0 14px;
  font-size: 14.500px;
  letter-spacing: -0.250px;
}
.bm { display: flex; align-items: center; flex: none; gap: 8px; }
.bm span { padding-bottom: 2px; }
.bm .ic { width: 18px; height: 18px; color: #202124; --hole: #fff; }
.gmail { width: 90px; }
.gmail .ic { height: 16px; }
.youtube { width: 111px; }
.youtube .ic { width: 20px; }
.maps { width: 90px; }
.maps .ic { width: 19px; height: 22px; }
.news { width: 89px; gap: 9px; }
.news .ic { height: 20px; }
.translate { width: 114px; }
.translate .ic { width: 20px; height: 22px; }
.dir { width: 118px; gap: 9px; }
.dir .ic { width: 21px; }
.python { width: 193px; gap: 9px; letter-spacing: -0.100px; }
.python .ic { width: 14px; height: 22px; }
.seb1 { width: 194px; gap: 9px; letter-spacing: -0.350px; }
.seb2 { width: 193px; letter-spacing: -0.350px; }
.penseum .ic { width: 20px; height: 20px; }
.penseum { gap: 7px; letter-spacing: -0.100px; }
.bookmarks .divider { margin-left: auto; margin-right: 20px; }
.all { width: 126px; gap: 10px; }
.all .ic { width: 21px; }

/* Default-browser prompt */
.infobar {
  flex: none;
  height: 73px;
  display: flex;
  align-items: center;
  padding: 7px 26px 0 20px;
  border-bottom: 1px solid #4c4448;
  font-size: 15.500px;
}
.brand { width: 21px; height: 21px; margin-right: 22px; }
.message { width: 321px; letter-spacing: -0.040px; }
.default-btn {
  width: 140px;
  height: 48px;
  border: 0;
  border-radius: 24px;
  padding: 0;
  background: #fcaee0;
  color: #4d1436;
  font: 600 15px "Open Sans", sans-serif;
}
.dismiss { width: 14px; height: 14px; margin-left: auto; }

/* Report */
.viewport { flex: none; height: 804px; display: flex; overflow: hidden; background: #282a36; border-bottom: 1px solid #4a4848; }
.report {
  flex: 1;
  list-style: none;
  margin: -1.900px 0 0;
  padding: 0;
  color: #f8f8f2;
  font-size: 17.500px;
}
.report li {
  height: 50.220px;
  display: flex;
  align-items: center;
  padding-left: 20px;
  border-bottom: 1px solid #313442;
}
.report .hover { background: #313442; }
.chev { width: 10px; height: 16px; }
.st { width: 18px; height: 18px; margin: 0 9px 0 8px; }
.report span { letter-spacing: -0.490px; }
.scrollbar {
  width: 21px;
  background: #f0f0f0;
  display: flex;
  flex-direction: column;
  align-items: center;
  padding: 8px 0 9px;
}
.thumb { width: 17px; height: 252px; margin: 501px 0 auto; background: #c1c1c1; }

/* Taskbar */
.taskbar {
  flex: 1;
  display: flex;
  align-items: center;
  padding-bottom: 1px;
  background: linear-gradient(90deg, #242321, #2a2517 8%, #2a2517 20%, #252422 32%, #242321 60%, #282321 80%, #242322);
  color: #f4f4f4;
  font-size: 14.500px;
}
.weather { width: 253px; padding-left: 22px; display: flex; align-items: center; gap: 2px; }
.weather svg { margin-top: -7px; }
.weather-text { display: flex; flex-direction: column; line-height: 20px; letter-spacing: -0.500px; }
.muted { color: #cfcdc8; }
.count { font: 14px "Open Sans", sans-serif; fill: #34211f; }
.start { margin-right: 17px; }
.search {
  width: 274px;
  height: 40px;
  border-radius: 20px;
  border: 1px solid #5b584e;
  background: #454338;
  display: flex;
  align-items: center;
  padding: 0 2px 0 14px;
  font-size: 16.500px;
  letter-spacing: -0.200px;
  color: #d8d7d2;
}
.search > span { margin-left: 11px; }
.highlight {
  margin-left: auto;
  width: 66px;
  height: 34px;
  border-radius: 17px;
  background: #565449;
  display: flex;
  align-items: center;
  justify-content: center;
}
.apps { display: flex; margin-left: 6px; gap: 5px; }
.app {
  position: relative;
  width: 50px;
  height: 50px;
  border-radius: 6px;
  display: flex;
  align-items: center;
  justify-content: center;
}
.app svg { width: 30px; height: 30px; }
.app.wide svg { width: 34px; }
.current { background: #333230; border: 1px solid #3c3b39; }
.run::after {
  content: "";
  position: absolute;
  bottom: 1px;
  left: 21px;
  width: 8px;
  height: 4px;
  border-radius: 2px;
  background: #9b9997;
}
.current.run::after { left: 14px; bottom: 0; width: 20px; background: #f4806a; }
.profile {
  position: absolute;
  left: 25px;
  top: 3px;
  width: 20px;
  height: 20px;
  border-radius: 50%;
  background: #5d4037;
  color: #d8cbc6;
  font-size: 12px;
  line-height: 20px;
  text-align: center;
}
.ide { font: bold 7px "Open Sans", sans-serif; fill: #f07c18; }
.tray { margin-left: auto; margin-right: 28px; display: flex; align-items: center; gap: 10px; }
.up { margin-right: 15px; }
.lang { width: 31px; text-align: center; margin-right: 11px; }
.lang, .clock { display: flex; flex-direction: column; line-height: 20px; letter-spacing: -0.300px; }
.clock { width: 88px; text-align: right; letter-spacing: 0; font-size: 15px; }
.date { letter-spacing: 0.150px; }
```
